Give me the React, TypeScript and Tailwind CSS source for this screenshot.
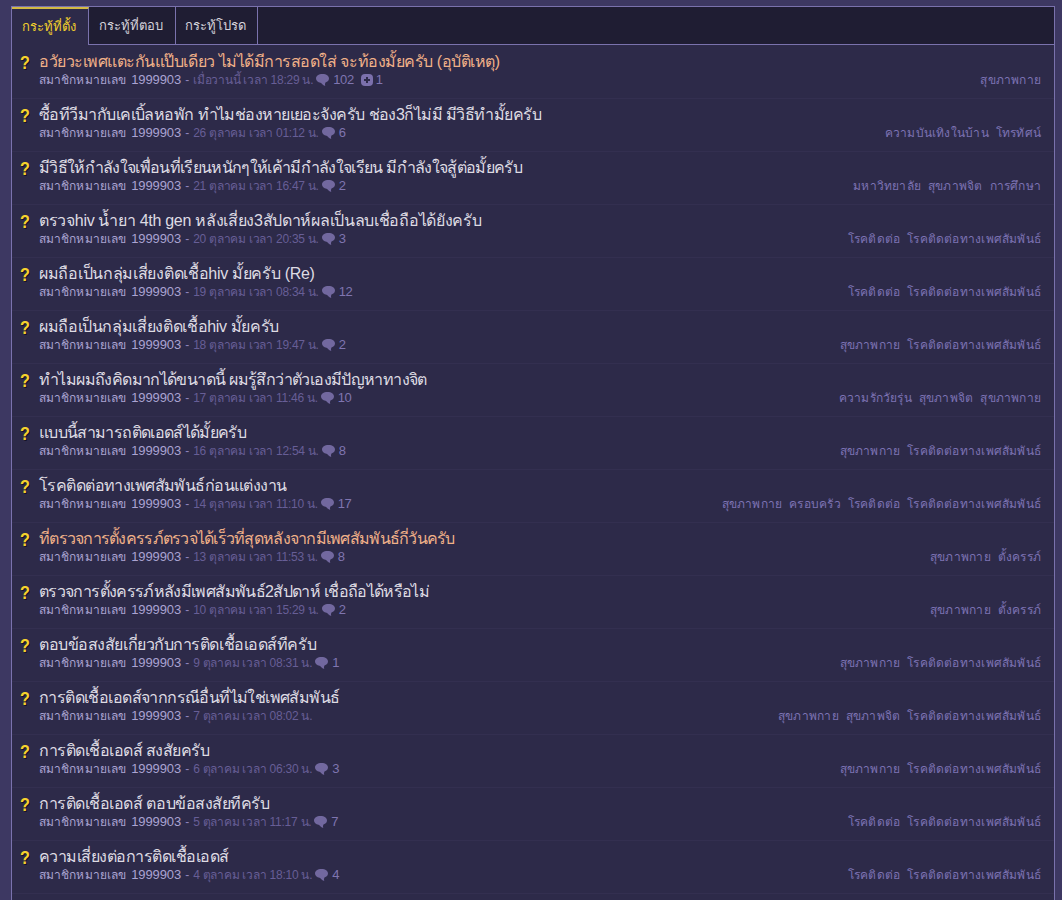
import clsx from "clsx";

interface Topic {
  title: string;
  tracking: string;
  time: string;
  comments?: number;
  votes?: number;
  tags: string[];
  hot?: boolean;
}

const topics: Topic[] = [
  { title: "อวัยวะเพศแตะกันแป๊บเดียว ไม่ได้มีการสอดใส่ จะท้องมั้ยครับ (อุบัติเหตุ)", tracking: "tracking-[-0.47px]", time: "เมื่อวานนี้ เวลา 18:29 น.", comments: 102, votes: 1, tags: ["สุขภาพกาย"], hot: true },
  { title: "ซื้อทีวีมากับเคเบิ้ลหอพัก ทำไมช่องหายเยอะจังครับ ช่อง3ก็ไม่มี มีวิธีทำมั้ยครับ", tracking: "tracking-[-0.55px]", time: "26 ตุลาคม เวลา 01:12 น.", comments: 6, tags: ["ความบันเทิงในบ้าน", "โทรทัศน์"] },
  { title: "มีวิธีให้กำลังใจเพื่อนที่เรียนหนักๆให้เค้ามีกำลังใจเรียน มีกำลังใจสู้ต่อมั้ยครับ", tracking: "tracking-[-0.67px]", time: "21 ตุลาคม เวลา 16:47 น.", comments: 2, tags: ["มหาวิทยาลัย", "สุขภาพจิต", "การศึกษา"] },
  { title: "ตรวจhiv น้ำยา 4th gen หลังเสี่ยง3สัปดาห์ผลเป็นลบเชื่อถือได้ยังครับ", tracking: "tracking-[-0.3px]", time: "20 ตุลาคม เวลา 20:35 น.", comments: 3, tags: ["โรคติดต่อ", "โรคติดต่อทางเพศสัมพันธ์"] },
  { title: "ผมถือเป็นกลุ่มเสี่ยงติดเชื้อhiv มั้ยครับ (Re)", tracking: "tracking-[-0.3px]", time: "19 ตุลาคม เวลา 08:34 น.", comments: 12, tags: ["โรคติดต่อ", "โรคติดต่อทางเพศสัมพันธ์"] },
  { title: "ผมถือเป็นกลุ่มเสี่ยงติดเชื้อhiv มั้ยครับ", tracking: "tracking-[-0.36px]", time: "18 ตุลาคม เวลา 19:47 น.", comments: 2, tags: ["สุขภาพกาย", "โรคติดต่อทางเพศสัมพันธ์"] },
  { title: "ทำไมผมถึงคิดมากได้ขนาดนี้ ผมรู้สึกว่าตัวเองมีปัญหาทางจิต", tracking: "tracking-[-0.61px]", time: "17 ตุลาคม เวลา 11:46 น.", comments: 10, tags: ["ความรักวัยรุ่น", "สุขภาพจิต", "สุขภาพกาย"] },
  { title: "แบบนี้สามารถติดเอดส์ได้มั้ยครับ", tracking: "tracking-[-0.65px]", time: "16 ตุลาคม เวลา 12:54 น.", comments: 8, tags: ["สุขภาพกาย", "โรคติดต่อทางเพศสัมพันธ์"] },
  { title: "โรคติดต่อทางเพศสัมพันธ์ก่อนแต่งงาน", tracking: "tracking-[-0.57px]", time: "14 ตุลาคม เวลา 11:10 น.", comments: 17, tags: ["สุขภาพกาย", "ครอบครัว", "โรคติดต่อ", "โรคติดต่อทางเพศสัมพันธ์"] },
  { title: "ที่ตรวจการตั้งครรภ์ตรวจได้เร็วที่สุดหลังจากมีเพศสัมพันธ์กี่วันครับ", tracking: "tracking-[-0.73px]", time: "13 ตุลาคม เวลา 11:53 น.", comments: 8, tags: ["สุขภาพกาย", "ตั้งครรภ์"], hot: true },
  { title: "ตรวจการตั้งครรภ์หลังมีเพศสัมพันธ์2สัปดาห์ เชื่อถือได้หรือไม่", tracking: "tracking-[-0.64px]", time: "10 ตุลาคม เวลา 15:29 น.", comments: 2, tags: ["สุขภาพกาย", "ตั้งครรภ์"] },
  { title: "ตอบข้อสงสัยเกี่ยวกับการติดเชื้อเอดส์ทีครับ", tracking: "tracking-[-0.45px]", time: "9 ตุลาคม เวลา 08:31 น.", comments: 1, tags: ["สุขภาพกาย", "โรคติดต่อทางเพศสัมพันธ์"] },
  { title: "การติดเชื้อเอดส์จากกรณีอื่นที่ไม่ใช่เพศสัมพันธ์", tracking: "tracking-[-0.59px]", time: "7 ตุลาคม เวลา 08:02 น.", tags: ["สุขภาพกาย", "สุขภาพจิต", "โรคติดต่อทางเพศสัมพันธ์"] },
  { title: "การติดเชื้อเอดส์ สงสัยครับ", tracking: "tracking-[-0.5px]", time: "6 ตุลาคม เวลา 06:30 น.", comments: 3, tags: ["สุขภาพกาย", "โรคติดต่อทางเพศสัมพันธ์"] },
  { title: "การติดเชื้อเอดส์ ตอบข้อสงสัยทีครับ", tracking: "tracking-[-0.46px]", time: "5 ตุลาคม เวลา 11:17 น.", comments: 7, tags: ["โรคติดต่อ", "โรคติดต่อทางเพศสัมพันธ์"] },
  { title: "ความเสี่ยงต่อการติดเชื้อเอดส์", tracking: "tracking-[-0.52px]", time: "4 ตุลาคม เวลา 18:10 น.", comments: 4, tags: ["โรคติดต่อ", "โรคติดต่อทางเพศสัมพันธ์"] },
];

const tabs = [
  { label: "กระทู้ที่ตั้ง", width: "w-[77px]" },
  { label: "กระทู้ที่ตอบ", width: "w-[87px]" },
  { label: "กระทู้โปรด", width: "w-[82px]" },
];

function CommentIcon() {
  return (
    <svg width="13" height="12" viewBox="0 0 13 12" className="-mt-px shrink-0 fill-[#72689f]">
      <path d="M6.500 0C2.500 0 0 1.900 0 4.500 0 6.800 1.900 8.300 4.500 8.800 5.800 9.100 6.500 11.200 9.300 12 8.800 10.800 9 9.600 9.500 8.500 11.700 7.800 13 6.400 13 4.500 13 1.900 10.500 0 6.500 0z" />
    </svg>
  );
}

function VoteIcon() {
  return (
    <svg width="12" height="12" viewBox="0 0 12 12" className="-mt-px shrink-0">
      <rect width="12" height="12" rx="4" className="fill-[#7b70ac]" />
      <path d="M6 3v6M3 6h6" strokeWidth="2" className="stroke-[#2d2a49]" />
    </svg>
  );
}

function TopicRow({ topic }: { topic: Topic }) {
  return (
    <div className="flex h-[53px] shrink-0 border-b border-[#332f50] pr-[13px]">
      <div className="w-[27px] shrink-0 pl-2 pt-[7px] text-[18px] leading-5 font-bold text-[#f5d22d] [text-shadow:1px_1px_0_#151225]">
        <span className="inline-block origin-left scale-x-90">?</span>
      </div>
      <div className="flex min-w-0 grow flex-col pt-1.5">
        <h2
          className={clsx(
            "h-5 text-[16px] leading-5 whitespace-nowrap",
            topic.tracking,
            topic.hot ? "text-[#f0b088]" : "text-[#dedbe3]"
          )}
        >
          {topic.title}
        </h2>
        <div className="flex h-4 items-center text-[12px] leading-4 whitespace-nowrap text-[#675e96]">
          <span className="mr-1 flex gap-[5px] text-[#aaa3d2]">
            <span className="tracking-[0.1px]">สมาชิกหมายเลข</span>
            <span className="text-[13px] tracking-[-0.1px]">1999903</span>
          </span>
          <span className="mr-1 text-[#8d84bb]">-</span>
          <span className="tracking-[-0.25px]">{topic.time}</span>
          {topic.comments && (
            <span className="ml-[3px] flex items-center gap-1 text-[#7f75b0]">
              <CommentIcon />
              <span className="text-[13px] tracking-[-0.4px]">{topic.comments}</span>
            </span>
          )}
          {topic.votes && (
            <span className="ml-[7px] flex items-center gap-[3px] text-[#7f75b0]">
              <VoteIcon />
              <span className="text-[13px]">{topic.votes}</span>
            </span>
          )}
          <span className="ml-auto flex gap-[7px] tracking-[0.21px] text-[#7c72b3]">
            {topic.tags.map((tag) => (
              <span key={tag}>{tag}</span>
            ))}
          </span>
        </div>
      </div>
    </div>
  );
}

export default function App() {
  return (
    <div className="flex h-[900px] overflow-hidden bg-[#3d3862] pt-1.5 pr-[7px] pl-[11px] font-['Liberation_Sans',sans-serif]">
      <div className="flex grow flex-col border-x border-t border-[#7a72ad] bg-[#2d2a49]">
        <div className="flex h-[38px] shrink-0 bg-[#1f1d33]">
          {tabs.map((tab, i) => (
            <div
              key={tab.label}
              className={clsx(
                "flex shrink-0 items-center justify-center border-r border-[#7a72ad] pr-0.5 text-[13px] whitespace-nowrap",
                tab.width,
                i === 0
                  ? "border-t-2 border-t-[#d3b945] bg-[#2d2a49] text-[#f2cf2c]"
                  : "border-b border-b-[#7a72ad] text-[#d3d1da]"
              )}
            >
              {tab.label}
            </div>
          ))}
          <div className="grow border-b border-[#7a72ad]" />
        </div>
        <div className="flex flex-col pt-px">
          {topics.map((topic) => (
            <TopicRow key={topic.time} topic={topic} />
          ))}
        </div>
      </div>
    </div>
  );
}
